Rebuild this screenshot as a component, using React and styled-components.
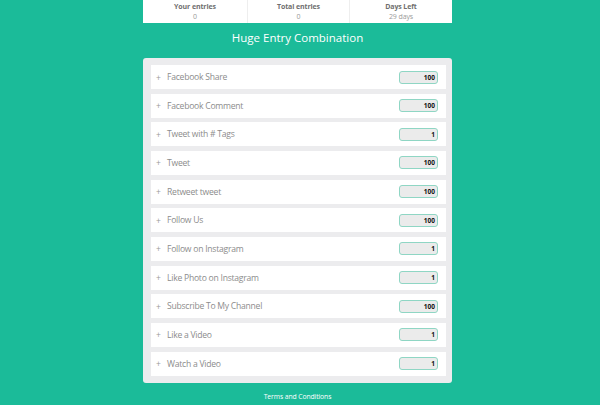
import React from "react";
import styled, { createGlobalStyle } from "styled-components";

const GlobalStyle = createGlobalStyle`
  html, body {
    margin: 0;
    padding: 0;
    background: #1bbb99;
    font-family: "Open Sans", "Liberation Sans", sans-serif;
  }
`;

const entries = [
  { label: "Facebook Share", value: "100" },
  { label: "Facebook Comment", value: "100" },
  { label: "Tweet with # Tags", value: "1" },
  { label: "Tweet", value: "100" },
  { label: "Retweet tweet", value: "100" },
  { label: "Follow Us", value: "100" },
  { label: "Follow on Instagram", value: "1" },
  { label: "Like Photo on Instagram", value: "1" },
  { label: "Subscribe To My Channel", value: "100" },
  { label: "Like a Video", value: "1" },
  { label: "Watch a Video", value: "1" }
];

const stats = [
  { title: "Your entries", value: "0" },
  { title: "Total entries", value: "0" },
  { title: "Days Left", value: "29 days" }
];

function App() {
  return (
    <>
      <GlobalStyle />
      <Page>
        <Wrap>
          <StatsBar>
            {stats.map(s => (
              <Stat key={s.title}>
                <StatTitle>{s.title}</StatTitle>
                <StatValue>{s.value}</StatValue>
              </Stat>
            ))}
          </StatsBar>
          <Title>Huge Entry Combination</Title>
          <Card>
            {entries.map(e => (
              <Row key={e.label}>
                <Plus>+</Plus>
                <Label>{e.label}</Label>
                <ValueBox>{e.value}</ValueBox>
              </Row>
            ))}
          </Card>
          <Footer>Terms and Conditions</Footer>
        </Wrap>
      </Page>
    </>
  );
}

export default App;

const Page = styled.div`
  width: 600px;
  height: 405px;
  display: flex;
  overflow: hidden;
`;

const Wrap = styled.div`
  width: 309px;
  margin-left: 143px;
  display: flex;
  flex-direction: column;
`;

const StatsBar = styled.div`
  height: 23px;
  background: #fff;
  display: grid;
  grid-template-columns: 104px 102px 1fr;
`;

const Stat = styled.div`
  display: flex;
  flex-direction: column;
  align-items: center;
  padding-top: 2px;
  line-height: 10px;
  & + & {
    border-left: 1px solid #eeeeee;
  }
`;

const StatTitle = styled.div`
  font-size: 7px;
  font-weight: 700;
  color: #6f6f6f;
  letter-spacing: -0.1px;
`;

const StatValue = styled.div`
  font-size: 7px;
  color: #9a9a9a;
  letter-spacing: -0.1px;
`;

const Title = styled.div`
  height: 35px;
  line-height: 29px;
  text-align: center;
  color: #fff;
  font-size: 11.5px;
`;

const Card = styled.div`
  background: #ececee;
  border-radius: 3px;
  padding: 7px 6px 7.5px 8px;
  display: flex;
  flex-direction: column;
  gap: 4.67px;
`;

const Row = styled.div`
  height: 24px;
  background: #fff;
  display: flex;
  align-items: center;
  padding: 0 8px 0 5px;
`;

const Plus = styled.span`
  width: 11px;
  font-size: 8.5px;
  color: #999;
`;

const Label = styled.span`
  flex: 1;
  font-size: 8.6px;
  letter-spacing: -0.25px;
  color: #8c8c8c;
`;

const ValueBox = styled.div`
  width: 35px;
  height: 11px;
  border: 1px solid #8fd6c4;
  border-radius: 3px;
  background: #ebebeb;
  font-size: 6.5px;
  font-weight: 700;
  color: #111;
  text-align: right;
  line-height: 11px;
  padding-right: 2px;
`;

const Footer = styled.div`
  text-align: center;
  color: #fff;
  font-size: 6.8px;
  letter-spacing: -0.1px;
  margin-top: 9px;
`;
